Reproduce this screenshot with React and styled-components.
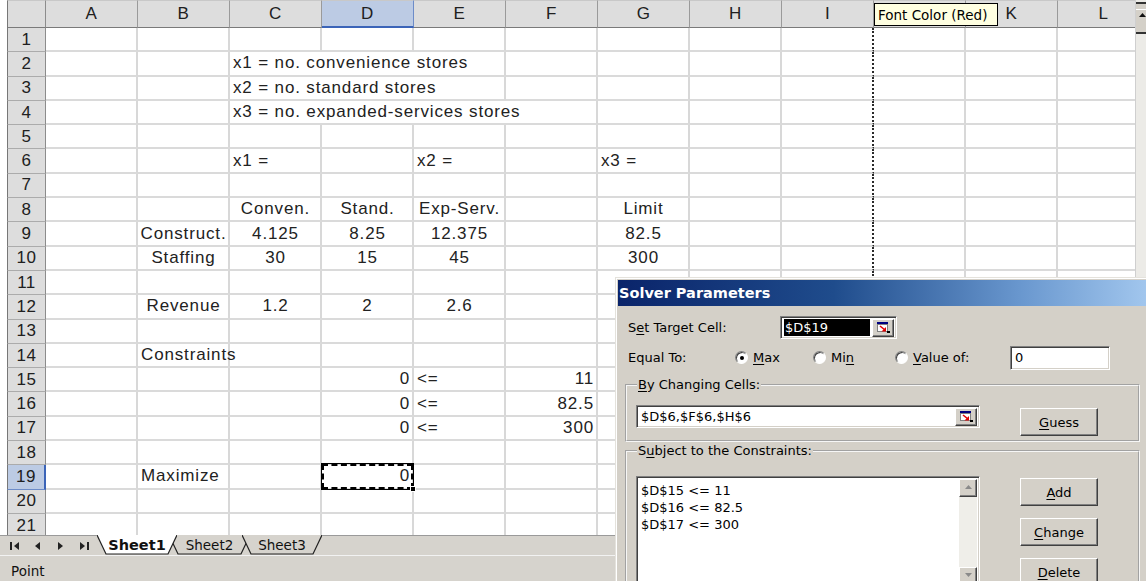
import React from 'react';
import styled, { createGlobalStyle, css } from 'styled-components';

const GlobalStyle = createGlobalStyle`
  *, *::before, *::after { box-sizing: border-box; }
  html, body { margin: 0; padding: 0; background: #fff; overflow: hidden; }
`;

const COLUMNS = ['A', 'B', 'C', 'D', 'E', 'F', 'G', 'H', 'I', 'J', 'K', 'L'];
const ROW_COUNT = 21;
const ACTIVE = { row: 19, col: 'D' };
// the screen tip sits over this column's heading
const TIP_COLUMN = 'J';

// cell contents keyed by row number
const SHEET = {
  2: [{ col: 'C', text: 'x1 = no. convenience stores', span: 3 }],
  3: [{ col: 'C', text: 'x2 = no. standard stores', span: 3 }],
  4: [{ col: 'C', text: 'x3 = no. expanded-services stores', span: 4 }],
  6: [{ col: 'C', text: 'x1 =' }, { col: 'E', text: 'x2 =' }, { col: 'G', text: 'x3 =' }],
  8: [
    { col: 'C', text: 'Conven.', align: 'center' },
    { col: 'D', text: 'Stand.', align: 'center' },
    { col: 'E', text: 'Exp-Serv.', align: 'center' },
    { col: 'G', text: 'Limit', align: 'center' },
  ],
  9: [
    { col: 'B', text: 'Construct.', align: 'center' },
    { col: 'C', text: '4.125', align: 'center' },
    { col: 'D', text: '8.25', align: 'center' },
    { col: 'E', text: '12.375', align: 'center' },
    { col: 'G', text: '82.5', align: 'center' },
  ],
  10: [
    { col: 'B', text: 'Staffing', align: 'center' },
    { col: 'C', text: '30', align: 'center' },
    { col: 'D', text: '15', align: 'center' },
    { col: 'E', text: '45', align: 'center' },
    { col: 'G', text: '300', align: 'center' },
  ],
  12: [
    { col: 'B', text: 'Revenue', align: 'center' },
    { col: 'C', text: '1.2', align: 'center' },
    { col: 'D', text: '2', align: 'center' },
    { col: 'E', text: '2.6', align: 'center' },
  ],
  14: [{ col: 'B', text: 'Constraints' }],
  15: [{ col: 'D', text: '0', align: 'right' }, { col: 'E', text: '<=' }, { col: 'F', text: '11', align: 'right' }],
  16: [{ col: 'D', text: '0', align: 'right' }, { col: 'E', text: '<=' }, { col: 'F', text: '82.5', align: 'right' }],
  17: [{ col: 'D', text: '0', align: 'right' }, { col: 'E', text: '<=' }, { col: 'F', text: '300', align: 'right' }],
  19: [{ col: 'B', text: 'Maximize' }, { col: 'D', text: '0', align: 'right' }],
};

const CONSTRAINTS = ['$D$15 <= 11', '$D$16 <= 82.5', '$D$17 <= 300'];

/* ---------- window ---------- */

const Window = styled.div`
  position: relative;
  width: 1146px;
  height: 581px;
  overflow: hidden;
  background: #fff;
  display: flex;
  flex-direction: column;
  font-family: "Liberation Sans", Arial, sans-serif;
`;

const SheetArea = styled.div`
  display: flex;
  height: 535px;
  flex: none;
  overflow: hidden;
`;

const Grid = styled.div`
  flex: 1;
  min-width: 0;
  overflow: hidden;
  padding-left: 7px;
`;

const Row = styled.div`
  display: grid;
  grid-template-columns: 39px repeat(12, 92px);
  height: ${p => (p.$head ? 28 : 24.3)}px;
`;

const headBase = css`
  display: flex;
  align-items: center;
  justify-content: center;
  background: #dddddd;
  color: #202020;
  font-size: 17px;
  letter-spacing: 0.5px;
`;

const Corner = styled.div`
  ${headBase};
  border-left: 1px solid #777;
  border-right: 1px solid #8c8c8c;
  border-bottom: 1px solid #7a7a7a;
  border-top: 1px solid #c8c8c8;
`;

const ColHead = styled.div`
  ${headBase};
  border-right: 1px solid #9a9a9a;
  border-top: 1px solid #c8c8c8;
  border-bottom: 1px solid #7a7a7a;
  ${p => p.$sel && css`
    background: #bccbe4;
    border-bottom: 2px solid #3b64b8;
    border-right-color: #6d8cc8;
  `}
`;

const RowHead = styled.div`
  ${headBase};
  border-left: 1px solid #777;
  border-right: 1px solid #8c8c8c;
  border-bottom: 1px solid #ababab;
  ${p => p.$sel && css`
    background: #bccbe4;
    border-right: 2px solid #3b64b8;
    border-bottom-color: #6d8cc8;
  `}
`;

const Cell = styled.div`
  grid-column: span ${p => p.$span};
  position: relative;
  display: flex;
  align-items: center;
  justify-content: ${p => (p.$align === 'center' ? 'center' : p.$align === 'right' ? 'flex-end' : 'flex-start')};
  padding: 0 2px 0 3px;
  border-right: 2px ${p => (p.$break ? 'dotted #2a2a2a' : 'solid #d8d8d8')};
  border-bottom: 2px solid #dadada;
  white-space: nowrap;
  font-size: 17px;
  letter-spacing: 0.85px;
  color: #222;
  ${p => p.$active && css`
    z-index: 1;
    &::before {
      content: '';
      position: absolute;
      inset: -2px -2px -2px -1px;
      border: 1px solid #000;
    }
    &::after {
      content: '';
      position: absolute;
      inset: -1px -1px -1px 0;
      border: 2px dashed #000;
    }
  `}
`;

const FillHandle = styled.span`
  position: absolute;
  right: -4px;
  bottom: -4px;
  width: 6px;
  height: 6px;
  background: #000;
  border: 1px solid #fff;
  z-index: 2;
`;

const CellText = styled.span`
  position: relative;
  z-index: 1;
`;

const VScroll = styled.div`
  flex: none;
  width: 11px;
  display: flex;
  flex-direction: column;
  background: #ecebe7;
  border-left: 1px solid #cfcfcf;
`;

const SplitBox = styled.div`
  height: 7px;
  background: #d4d0c8;
  border-top: 2px solid #333;
  margin-top: 2px;
`;

const ScrollArrow = styled.div`
  height: 25px;
  background: #d4d0c8;
  border-top: 1px solid #fff;
  border-bottom: 2px solid #333;
  display: flex;
  align-items: flex-start;
  padding: 2px 0 0 3px;
`;

/* ---------- sheet tabs & status ---------- */

const TabBar = styled.div`
  height: 20px;
  flex: none;
  display: flex;
  align-items: stretch;
  background: #d6d3cd;
  border-top: 1px solid #9a9a9a;
`;

const NavGroup = styled.div`
  display: flex;
  align-items: center;
  padding-left: 3px;
  width: 97px;
  flex: none;
`;

const NavButton = styled.div`
  width: 23px;
  display: flex;
  justify-content: center;
`;

const Tab = styled.div`
  position: relative;
  width: ${p => p.$w}px;
  margin-left: ${p => (p.$first ? 0 : -8)}px;
  margin-top: -1px;
  z-index: ${p => (p.$active ? 2 : 1)};
  display: flex;
  align-items: center;
  justify-content: center;
  font-family: "DejaVu Sans", Tahoma, sans-serif;
  font-size: ${p => (p.$active ? 14.5 : 13.5)}px;
  font-weight: ${p => (p.$active ? 700 : 400)};
  color: #111;
  padding-bottom: 1px;
`;

const TabShape = styled.svg`
  position: absolute;
  inset: 0;
  z-index: -1;
`;

const StatusBar = styled.div`
  flex: 1;
  background: #d6d3cd;
  border-top: 1px solid #f2f2f2;
  display: flex;
  align-items: center;
  padding: 4px 0 0 11px;
  font-family: "DejaVu Sans", Tahoma, sans-serif;
  font-size: 13.5px;
  color: #111;
`;

/* ---------- screen tip ---------- */

const Tooltip = styled.div`
  position: absolute;
  left: 874px;
  top: 3px;
  width: 124px;
  height: 23px;
  background: #ffffe1;
  border: 1px solid #000;
  display: flex;
  align-items: center;
  padding-left: 3px;
  font-family: "DejaVu Sans", Tahoma, sans-serif;
  font-size: 13.5px;
  color: #000;
  z-index: 5;
`;

/* ---------- solver dialog ---------- */

const Dialog = styled.div`
  position: absolute;
  left: 615px;
  top: 277px;
  width: 545px;
  height: 330px;
  background: #d4d0c8;
  border: 1px solid #e4e2dc;
  box-shadow: inset 1px 1px #fff;
  padding: 2px;
  font-family: "DejaVu Sans", Tahoma, sans-serif;
  font-size: 13px;
  color: #000;
  z-index: 10;
`;

const TitleBar = styled.div`
  height: 26px;
  display: flex;
  align-items: center;
  padding-left: 1px;
  background: linear-gradient(90deg, #0a246a 0%, #1f4c8c 40%, #6a98cf 75%, #a6caf0 100%);
  color: #fff;
  font-weight: 700;
  font-size: 14.5px;
`;

const Body = styled.div`
  display: flex;
  flex-direction: column;
  padding: 10px 0 0 10px;
`;

const FieldRow = styled.div`
  display: flex;
  align-items: center;
  height: 23px;
  margin-top: ${p => p.$gap || 0}px;
`;

const Label = styled.span`
  width: ${p => p.$w}px;
  flex: none;
`;

const Key = styled.span`
  text-decoration: underline;
  text-underline-offset: 2px;
`;

const sunken = css`
  background: #fff;
  border: 1px solid;
  border-color: #808080 #fff #fff #808080;
  box-shadow: inset 1px 1px #404040, inset -1px -1px #d4d0c8;
`;

const raised = css`
  background: #d4d0c8;
  border: 1px solid;
  border-color: #fff #404040 #404040 #fff;
  box-shadow: inset -1px -1px #808080;
`;

const RefBox = styled.div`
  ${sunken};
  width: ${p => p.$w}px;
  height: 23px;
  flex: none;
  display: flex;
  align-items: center;
  padding: 2px 2px 2px 3px;
`;

const RefText = styled.span`
  flex: 1;
  height: 100%;
  display: flex;
  align-items: center;
  padding-left: 1px;
  ${p => p.$selected && css`
    background: #000;
    color: #fff;
  `}
`;

const PickerButton = styled.span`
  ${raised};
  width: 22px;
  height: 18px;
  flex: none;
  margin-left: 2px;
  display: flex;
  align-items: center;
  justify-content: center;
`;

const ValueBox = styled.div`
  ${sunken};
  width: 100px;
  height: 24px;
  display: flex;
  align-items: center;
  padding-left: 4px;
`;

const Option = styled.span`
  width: ${p => p.$w}px;
  flex: none;
  display: flex;
  align-items: center;
  gap: 5px;
`;

const Radio = styled.span`
  width: 13px;
  height: 13px;
  border-radius: 50%;
  background: #fff;
  border: 1px solid;
  border-color: #808080 #fff #fff #808080;
  box-shadow: inset 1px 1px #404040;
  display: flex;
  align-items: center;
  justify-content: center;
  &::after {
    content: '';
    width: 4px;
    height: 4px;
    border-radius: 50%;
    background: ${p => (p.$on ? '#000' : 'transparent')};
  }
`;

const Group = styled.fieldset`
  margin: ${p => p.$top}px 0 0 -3px;
  width: 515px;
  padding: ${p => p.$pad}px 0 4px 9px;
  border: 2px groove #f6f6f6;
  min-inline-size: 0;
`;

const Legend = styled.legend`
  padding: 0 1px;
  margin-left: 1px;
  line-height: 16px;
`;

const GroupRow = styled.div`
  display: flex;
  align-items: flex-start;
`;

const ButtonColumn = styled.div`
  display: flex;
  flex-direction: column;
  gap: 12px;
  margin: 2px 0 0 40px;
`;

const Button = styled.div`
  ${raised};
  width: 78px;
  height: 28px;
  display: flex;
  align-items: center;
  justify-content: center;
  margin-left: ${p => p.$ml || 0}px;
  margin-top: ${p => p.$mt || 0}px;
`;

const ListBox = styled.div`
  ${sunken};
  width: 344px;
  height: 112px;
  display: flex;
  padding: 2px;
`;

const ListItems = styled.div`
  flex: 1;
  padding: 3px 0 0 2px;
  line-height: 17px;
`;

const ListScroll = styled.div`
  width: 18px;
  display: flex;
  flex-direction: column;
  justify-content: space-between;
  background: #efeee9;
`;

const ListArrow = styled.div`
  ${raised};
  height: 18px;
  display: flex;
  align-items: center;
  justify-content: center;
`;

/* ---------- little drawings ---------- */

const PickerIcon = () => (
  <svg width="15" height="13" viewBox="0 0 15 13">
    <rect x="1" y="1" width="11" height="2" fill="#000080" />
    <rect x="1.5" y="3.5" width="10" height="7" fill="#fff" stroke="#808080" />
    <path d="M4 5 L9 9" stroke="#e00000" strokeWidth="1.6" />
    <path d="M10 6 L10 10.5 L5.5 10.5 Z" fill="#e00000" />
    <rect x="11" y="10" width="3" height="2" fill="#000" />
  </svg>
);

const Arrow = ({ dir, color = '#222', bar }) => {
  const tri = {
    left: 'M6 0 L6 8 L1 4 Z',
    right: 'M1 0 L1 8 L6 4 Z',
    up: 'M0 5 L7 5 L3.5 1 Z',
    down: 'M0 1 L7 1 L3.5 5 Z',
  }[dir];
  const w = bar ? 10 : 7;
  return (
    <svg width={w} height="8" viewBox={`0 0 ${w} 8`}>
      {bar === 'left' && <rect x="0" y="0" width="2" height="8" fill={color} />}
      <path d={tri} fill={color} transform={bar === 'left' ? 'translate(3 0)' : undefined} />
      {bar === 'right' && <rect x="8" y="0" width="2" height="8" fill={color} />}
    </svg>
  );
};

const TabOutline = ({ w, active }) => (
  <TabShape width={w} height="20" viewBox={`0 0 ${w} 20`}>
    <path
      d={`M0 0 L9 19 L${w - 9} 19 L${w} 0`}
      fill={active ? '#fff' : '#d6d3cd'}
      stroke="#222"
      strokeWidth="1.2"
    />
  </TabShape>
);

/* ---------- sheet ---------- */

function SheetRow({ n }) {
  const entries = SHEET[n] || [];
  const cells = [];
  let i = 0;
  while (i < COLUMNS.length) {
    const col = COLUMNS[i];
    const entry = entries.find(e => e.col === col);
    const span = entry?.span || 1;
    const active = ACTIVE.row === n && ACTIVE.col === col;
    cells.push(
      <Cell
        key={col}
        $span={span}
        $align={entry?.align}
        $break={COLUMNS[i + span - 1] === 'I'}
        $active={active}
      >
        {entry && <CellText>{entry.text}</CellText>}
        {active && <FillHandle />}
      </Cell>
    );
    i += span;
  }
  return (
    <Row>
      <RowHead $sel={ACTIVE.row === n}>{n}</RowHead>
      {cells}
    </Row>
  );
}

const TABS = [
  { name: 'Sheet1', w: 80, active: true },
  { name: 'Sheet2', w: 81 },
  { name: 'Sheet3', w: 80 },
];

export default function App() {
  return (
    <Window>
      <GlobalStyle />
      <SheetArea>
        <Grid>
          <Row $head>
            <Corner />
            {COLUMNS.map(c => (
              <ColHead key={c} $sel={c === ACTIVE.col}>
                {c === TIP_COLUMN ? null : c}
              </ColHead>
            ))}
          </Row>
          {Array.from({ length: ROW_COUNT }, (_, i) => (
            <SheetRow key={i} n={i + 1} />
          ))}
        </Grid>
        <VScroll>
          <SplitBox />
          <ScrollArrow>
            <Arrow dir="up" color="#111" />
          </ScrollArrow>
        </VScroll>
      </SheetArea>

      <TabBar>
        <NavGroup>
          <NavButton><Arrow dir="left" bar="left" /></NavButton>
          <NavButton><Arrow dir="left" /></NavButton>
          <NavButton><Arrow dir="right" /></NavButton>
          <NavButton><Arrow dir="right" bar="right" /></NavButton>
        </NavGroup>
        {TABS.map((t, i) => (
          <Tab key={t.name} $w={t.w} $first={i === 0} $active={t.active}>
            <TabOutline w={t.w} active={t.active} />
            {t.name}
          </Tab>
        ))}
      </TabBar>
      <StatusBar>Point</StatusBar>

      <Tooltip>Font Color (Red)</Tooltip>

      <Dialog>
        <TitleBar>Solver Parameters</TitleBar>
        <Body>
          <FieldRow>
            <Label $w={152}>S<Key>e</Key>t Target Cell:</Label>
            <RefBox $w={117}>
              <RefText $selected>$D$19</RefText>
              <PickerButton><PickerIcon /></PickerButton>
            </RefBox>
          </FieldRow>
          <FieldRow $gap={7}>
            <Label $w={107}>Equal To:</Label>
            <Option $w={78}><Radio $on /><span><Key>M</Key>ax</span></Option>
            <Option $w={82}><Radio /><span>Mi<Key>n</Key></span></Option>
            <Option $w={115}><Radio /><span><Key>V</Key>alue of:</span></Option>
            <ValueBox>0</ValueBox>
          </FieldRow>

          <Group $top={8} $pad={12}>
            <Legend><Key>B</Key>y Changing Cells:</Legend>
            <GroupRow>
              <RefBox $w={344}>
                <RefText>$D$6,$F$6,$H$6</RefText>
                <PickerButton><PickerIcon /></PickerButton>
              </RefBox>
              <Button $ml={40} $mt={3}><span><Key>G</Key>uess</span></Button>
            </GroupRow>
          </Group>

          <Group $top={1} $pad={17}>
            <Legend>S<Key>u</Key>bject to the Constraints:</Legend>
            <GroupRow>
              <ListBox>
                <ListItems>
                  {CONSTRAINTS.map(c => <div key={c}>{c}</div>)}
                </ListItems>
                <ListScroll>
                  <ListArrow><Arrow dir="up" color="#8a8a8a" /></ListArrow>
                  <ListArrow><Arrow dir="down" color="#8a8a8a" /></ListArrow>
                </ListScroll>
              </ListBox>
              <ButtonColumn>
                <Button><span><Key>A</Key>dd</span></Button>
                <Button><span><Key>C</Key>hange</span></Button>
                <Button><span><Key>D</Key>elete</span></Button>
              </ButtonColumn>
            </GroupRow>
          </Group>
        </Body>
      </Dialog>
    </Window>
  );
}
